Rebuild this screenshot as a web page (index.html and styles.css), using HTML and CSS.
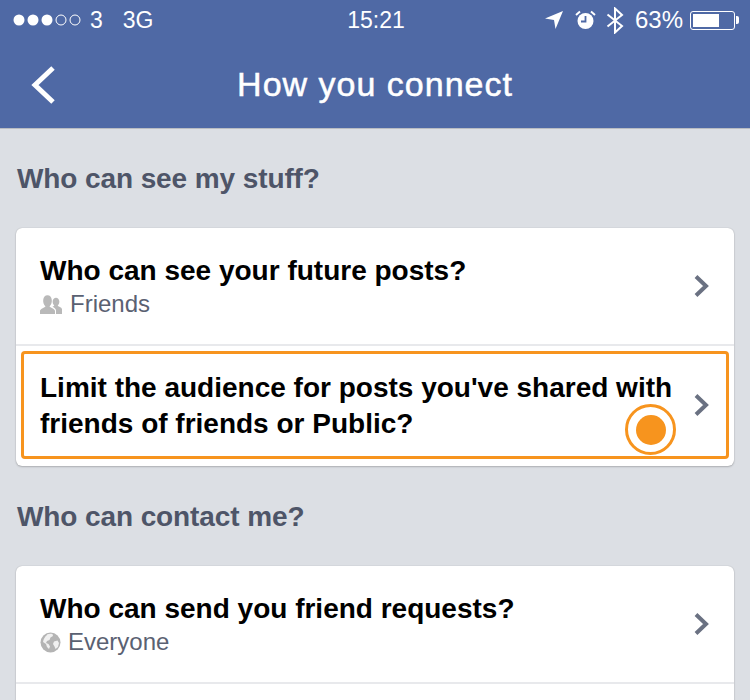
FILE: index.html
```html
<!DOCTYPE html>
<html lang="en">
<head>
<meta charset="utf-8">
<title>How you connect</title>
<link rel="stylesheet" href="styles.css">
</head>
<body>
<header class="top">
  <div class="status">
    <div class="status-left">
      <svg class="signal" width="69" height="14" viewBox="0 0 69 14"><g fill="#fff"><circle cx="6" cy="7" r="5.500"/><circle cx="20" cy="7" r="5.500"/><circle cx="34" cy="7" r="5.500"/></g><g fill="none" stroke="#fff" stroke-width="1"><circle cx="48" cy="7" r="5"/><circle cx="62" cy="7" r="5"/></g></svg>
      <span class="carrier">3</span>
      <span class="net">3G</span>
    </div>
    <div class="clock">15:21</div>
    <div class="status-right">
      <svg class="ico-loc" width="18" height="20" viewBox="0 0 18 20"><path d="M0 8.500 18 1 10.500 19 9 10z" fill="#fff"/></svg>
      <svg class="ico-alarm" width="21" height="20" viewBox="0 0 21 20"><circle cx="10.500" cy="11" r="8" fill="#fff"/><path d="M10.500 6v5.500H6" fill="none" stroke="#4f69a5" stroke-width="1.800"/><path d="M1 5 5 1.500M20 5 16 1.500" stroke="#fff" stroke-width="2" fill="none"/></svg>
      <svg class="ico-bt" width="18" height="27" viewBox="0 0 18 27"><path d="M1.500 7.500 16 19 9 25.500V1.500l7 6.500L1.500 19.500" fill="none" stroke="#fff" stroke-width="2"/></svg>
      <span class="pct">63%</span>
      <div class="battery"><div class="battery-fill"></div></div>
      <div class="battery-tip"></div>
    </div>
  </div>
  <div class="nav">
    <svg class="back" width="26" height="40" viewBox="0 0 26 40"><path d="M23 3 5 20l18 17" fill="none" stroke="#fff" stroke-width="5"/></svg>
    <h1 class="nav-title">How you connect</h1>
  </div>
</header>
<main class="page">
  <h2 class="section-title">Who can see my stuff?</h2>
  <section class="card">
    <div class="row">
      <div class="row-text">
        <div class="row-title">Who can see your future posts?</div>
        <div class="row-sub">
          <svg class="ico-friends" width="23" height="19" viewBox="0 0 23 19"><g fill="#b9b9b9"><path d="M0 19v-3c0-2 4-3 5.500-4.500-1.800-2-2.500-4-2.300-6.500C3.500 2 5 .3 7.500.3s4 1.700 4.300 4.700c.2 2.500-.5 4.500-2.300 6.500 1.500 1.500 5.500 2.500 5.500 4.500v3z"/><path d="M16 19v-3.500c0-1.500-1.500-2.700-3.500-3.700.5-.4 1.200-.7 1.800-1.100-1.300-1.500-1.800-3-1.600-4.700.2-2 1.500-3.300 3.300-3.300s3 1.300 3.300 3.300c.2 1.700-.3 3.200-1.600 4.700 1 .8 4.300 1.800 4.300 3.500V19z"/></g></svg>
          <span>Friends</span>
        </div>
      </div>
      <svg class="chev" width="17" height="24" viewBox="0 0 17 24"><path d="M3 2.500 13 12 3 21.500" fill="none" stroke="#6a7182" stroke-width="4"/></svg>
    </div>
    <div class="row row-tall">
      <div class="row-text">
        <div class="row-title">Limit the audience for posts you've shared with friends of friends or Public?</div>
      </div>
      <svg class="chev" width="17" height="24" viewBox="0 0 17 24"><path d="M3 2.500 13 12 3 21.500" fill="none" stroke="#6a7182" stroke-width="4"/></svg>
      <div class="highlight"></div>
      <div class="pulse"><div class="pulse-dot"></div></div>
    </div>
  </section>
  <h2 class="section-title">Who can contact me?</h2>
  <section class="card">
    <div class="row">
      <div class="row-text">
        <div class="row-title">Who can send you friend requests?</div>
        <div class="row-sub">
          <svg class="ico-globe" width="21" height="21" viewBox="0 0 21 21"><circle cx="10.500" cy="10.500" r="10" fill="#b4b4b4"/><path d="M7 2.500c2-1 4-1 5.500-.5l.5 2-2.500 1.500-1 2.500-2.500 1-1 2 2.500 1 1.500 2.500-1 2.500-2-2-1-3-3-2c.5-3 2-5.500 4-7zM14 9.500l3.500-1 1.500 2.500-1 4-2.500 2-1-2.500-1.500-2.500z" fill="#f0f0f0"/></svg>
          <span>Everyone</span>
        </div>
      </div>
      <svg class="chev" width="17" height="24" viewBox="0 0 17 24"><path d="M3 2.500 13 12 3 21.500" fill="none" stroke="#6a7182" stroke-width="4"/></svg>
    </div>
    <div class="row"></div>
  </section>
</main>
</body>
</html>
```
FILE: styles.css
```css
* { box-sizing: border-box; }
html, body { margin: 0; height: 700px; overflow: hidden; }
body { background: #dcdfe4; font-family: "Liberation Sans", Arial, sans-serif; }

.top { background: #4f69a5; height: 129px; border-bottom: 1px solid #b9bcc2; color: #fff; }
.status { height: 40px; display: grid; grid-template-columns: 1fr auto 1fr; align-items: center; padding: 0 11px 0 13px; font-size: 23px; }
.status-left { display: flex; align-items: center; }
.signal { margin-right: 8px; }
.carrier { margin-right: 20px; }
.status-right { display: flex; align-items: center; justify-content: flex-end; }
.ico-loc { margin-right: 12px; }
.ico-alarm { margin-right: 10px; }
.ico-bt { margin-right: 11px; }
.pct { margin-right: 7px; font-size: 24px; }
.battery { width: 45px; height: 19px; border: 1px solid #fff; border-radius: 3px; padding: 2px; }
.battery-fill { width: 26px; height: 100%; background: #fff; }
.battery-tip { width: 3px; height: 8px; background: #fff; margin-left: 1px; border-radius: 0 2px 2px 0; }

.nav { height: 88px; display: flex; align-items: center; justify-content: center; position: relative; }
.nav-title { margin: 0; font-size: 34px; font-weight: 400; -webkit-text-stroke: .5px #fff; letter-spacing: 1px; }
.back { position: absolute; left: 30px; top: 25px; }

.page { padding: 0 16px; }
.section-title { margin: 0; height: 99px; padding: 32px 0 0 1px; font-size: 28px; line-height: 36px; font-weight: 700; letter-spacing: -.1px; color: #4e5568; }
.card { background: #fff; border-radius: 6px; box-shadow: 0 1px 2px rgba(0, 0, 0, .2), 0 0 1px rgba(0, 0, 0, .25); margin-bottom: 32px; }
.card + .section-title { height: 68px; padding-top: 1px; }
.row { position: relative; display: flex; align-items: center; height: 118px; padding: 0 24px; border-bottom: 2px solid #e8e9ec; }
.row-tall { height: 120px; border-bottom: 0; }
.row-text { flex: 1; }
.row-title { font-size: 28px; line-height: 36px; font-weight: 700; color: #000; }
.row-sub { display: flex; align-items: center; gap: 7px; font-size: 24px; line-height: 30px; color: #5a6172; }
.chev { position: absolute; right: 24px; top: 46px; }
.row-tall .chev { top: 47px; }
.highlight { position: absolute; left: 5px; right: 5px; top: 5px; bottom: 7px; border: 3px solid #f7941e; border-radius: 4px; }
.pulse { position: absolute; left: 609px; top: 58px; width: 51px; height: 51px; border: 3px solid #f7941e; border-radius: 50%; background: #fff; display: flex; align-items: center; justify-content: center; }
.pulse-dot { width: 30px; height: 30px; border-radius: 50%; background: #f7941e; }
```
